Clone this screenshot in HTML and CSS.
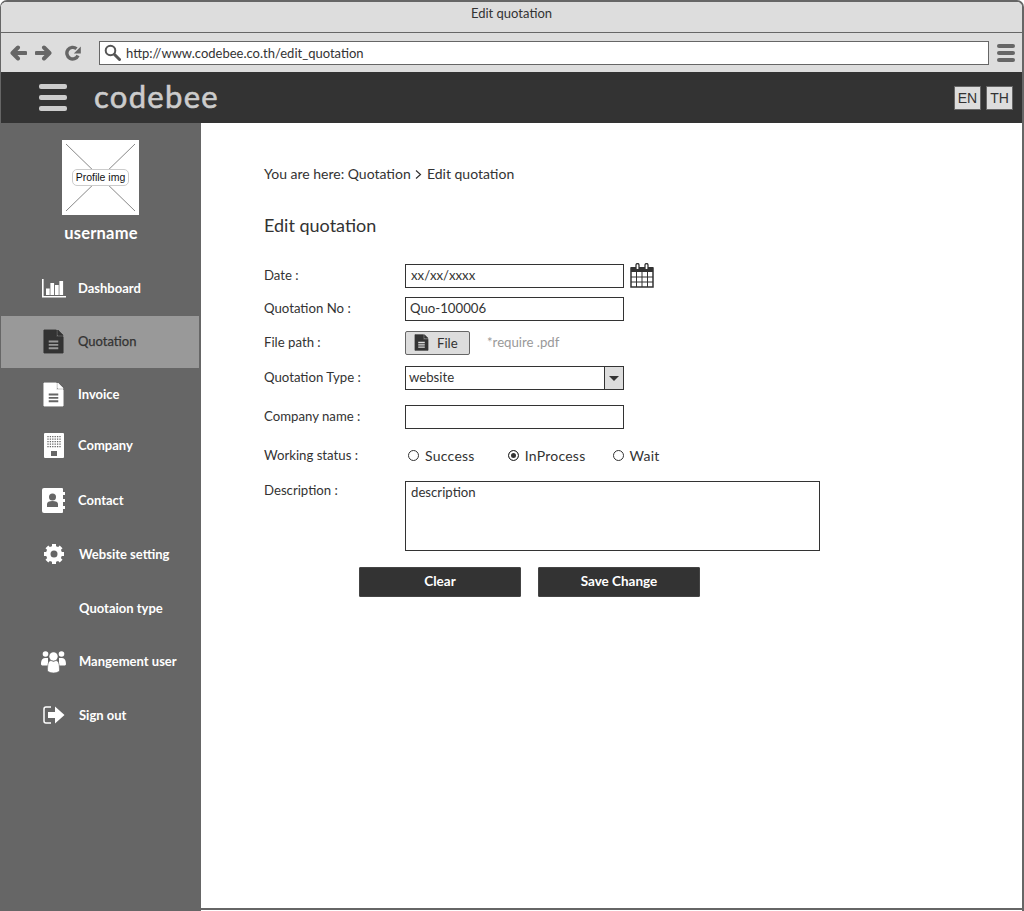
FILE: index.html
```html
<!DOCTYPE html>
<html lang="en">
<head>
    <meta charset="UTF-8">
    <meta name="viewport" content="width=device-width, initial-scale=1.0">
    <title>Edit quotation</title>
    <link rel="stylesheet" href="styles.css">
</head>
<body>
<div class="window">
    <div class="titlebar">Edit quotation</div>
    <div class="toolbar">
        <svg class="nav-icon" width="17" height="16" viewBox="0 0 17 16"><path d="M8 2.500 2.500 8 8 13.500M3 8h12.500" fill="none" stroke="#666" stroke-width="4" stroke-linecap="round" stroke-linejoin="round"/></svg>
        <svg class="nav-icon" width="17" height="16" viewBox="0 0 17 16"><path d="M9 2.500 14.500 8 9 13.500M14 8H1.500" fill="none" stroke="#666" stroke-width="4" stroke-linecap="round" stroke-linejoin="round"/></svg>
        <svg class="nav-icon reload" width="16" height="16" viewBox="0 0 16 16"><path d="M13 10.500A5.800 5.800 0 1 1 11.500 3.800" fill="none" stroke="#666" stroke-width="3.400"/><path d="M15.800 1.500v7H8.800z" fill="#666"/></svg>
        <div class="address">
            <svg width="17" height="17" viewBox="0 0 17 17"><circle cx="6.500" cy="6.500" r="4.800" fill="none" stroke="#555" stroke-width="2"/><path d="m10.500 10.500 5 5" stroke="#555" stroke-width="3" stroke-linecap="round"/></svg>
            <span>http://www.codebee.co.th/edit_quotation</span>
        </div>
        <div class="burger burger-small"><i></i><i></i><i></i></div>
    </div>
    <header class="appbar">
        <div class="burger burger-large"><i></i><i></i><i></i></div>
        <div class="logo">codebee</div>
        <div class="langs">
            <span class="lang">EN</span>
            <span class="lang">TH</span>
        </div>
    </header>
    <div class="body-row">
        <aside class="sidebar">
            <div class="profile-img">
                <svg width="77" height="75" viewBox="0 0 77 75"><path d="M4 4 73 71M73 4 4 71" stroke="#888" fill="none"/></svg>
                <span class="profile-label">Profile img</span>
            </div>
            <div class="username">username</div>
            <nav class="menu">
                <a class="menu-item m-dashboard">
                    <svg width="24" height="19" viewBox="0 0 24 19"><path d="M0 0h1.600v17H24v1.600H0z" fill="#fff"/><path d="M4 9.500h3.700V16H4zM8.400 4h3.700v12H8.400zM13 6h3.700v10H13zM17.400 2h3.700v14h-3.700z" fill="#fff"/></svg>
                    <span>Dashboard</span>
                </a>
                <a class="menu-item active">
                    <svg width="21" height="25" viewBox="0 0 22 26"><path d="M1 1h13v7h7v17H1z M15.500 1 21 6.500h-5.500z" fill="#333" stroke="#333" stroke-linejoin="round"/><path d="M6 13h10M6 16.500h10M6 20h10" stroke="#999" stroke-width="2"/></svg>
                    <span>Quotation</span>
                </a>
                <a class="menu-item m-invoice">
                    <svg width="21" height="25" viewBox="0 0 22 26"><path d="M1 1h13v7h7v17H1z M15.500 1 21 6.500h-5.500z" fill="#fff" stroke="#fff" stroke-linejoin="round"/><path d="M6 13h10M6 16.500h10M6 20h10" stroke="#666" stroke-width="2"/></svg>
                    <span>Invoice</span>
                </a>
                <a class="menu-item m-company">
                    <svg width="20" height="25" viewBox="0 0 20 25"><rect width="20" height="25" rx="1" fill="#fff"/><path d="M4 3v12M6.400 3v12M8.800 3v12M11.200 3v12M13.600 3v12M16 3v12" stroke="#666" stroke-width="1.300" stroke-dasharray="1.300 1.200"/><path d="M7 18h6v5H7z" fill="#666"/></svg>
                    <span>Company</span>
                </a>
                <a class="menu-item m-contact">
                    <svg width="23" height="25" viewBox="0 0 23 25"><path d="M2 0h18a1 1 0 0 1 1 1v23a1 1 0 0 1-1 1H2a2 2 0 0 1-2-2V2a2 2 0 0 1 2-2z" fill="#fff"/><path d="M21 4h2v3h-2zM21 11h2v3h-2zM21 18h2v3h-2z" fill="#fff"/><circle cx="10.500" cy="9" r="3.500" fill="#666"/><path d="M5 19v-3c0-2 2-3 5.500-3s5.500 1 5.500 3v3z" fill="#666"/></svg>
                    <span>Contact</span>
                </a>
                <a class="menu-item m-website m-shift">
                    <svg width="22" height="22" viewBox="0 0 22 22"><circle cx="11" cy="11" r="5.500" fill="none" stroke="#fff" stroke-width="5"/><path d="M11 1v20M1 11h20M3.900 3.900l14.200 14.200M18.100 3.900 3.900 18.100" stroke="#fff" stroke-width="4"/><circle cx="11" cy="11" r="3.500" fill="#666"/></svg>
                    <span>Website setting</span>
                </a>
                <a class="menu-item m-website m-shift">
                    <span class="icon-blank"></span>
                    <span>Quotaion type</span>
                </a>
                <a class="menu-item m-shift">
                    <svg width="25" height="23" viewBox="0 0 25 23"><circle cx="12.500" cy="6.500" r="4.200" fill="#fff"/><circle cx="4.500" cy="4" r="2.800" fill="#fff"/><circle cx="20.500" cy="4" r="2.800" fill="#fff"/><path d="M0 14.500C0 9 2 8 5 8h2v7.500H1zM25 14.500C25 9 23 8 20 8h-2v7.500h6z" fill="#fff"/><path d="M6.500 21c0-8 1-10 3.500-10.500l2.500 1 2.500-1c2.500.5 3.500 2.500 3.500 10.500-3 2.600-9 2.600-12 0z" fill="#fff" stroke="#666" stroke-width=".6"/></svg>
                    <span>Mangement user</span>
                </a>
                <a class="menu-item m-website m-shift">
                    <svg width="22" height="20" viewBox="0 0 22 20"><path d="M8 2H3a2 2 0 0 0-2 2v12a2 2 0 0 0 2 2h5" fill="none" stroke="#fff" stroke-width="1.500"/><path d="M5 7h7V1.500L21.500 10 12 18.500V13H5z" fill="#fff"/></svg>
                    <span>Sign out</span>
                </a>
            </nav>
        </aside>
        <main class="content">
            <div class="breadcrumb">You are here: Quotation
                <svg class="crumb-sep" width="7" height="9" viewBox="0 0 7 9"><path d="m1 .5 4.500 4-4.500 4" fill="none" stroke="#333" stroke-width="1.200"/></svg>
                Edit quotation</div>
            <h1 class="page-title">Edit quotation</h1>
            <form class="form">
                <div class="form-row">
                    <label>Date :</label>
                    <div class="field">
                        <div class="input input-date">xx/xx/xxxx</div>
                        <svg class="calendar" width="24" height="25" viewBox="0 0 24 25"><path d="M1 5h22v19H1z" fill="#fff" stroke="#333" stroke-width="1.500"/><path d="M1 4h22v5H1z" fill="#333"/><path d="M1 14h22M1 19h22M6.500 9v15M12 9v15M17.500 9v15" stroke="#333"/><path d="M6 6V2a1.500 1.500 0 0 1 3 0v4M15 6V2a1.500 1.500 0 0 1 3 0v4" fill="#fff" stroke="#333" stroke-width="1.300"/></svg>
                    </div>
                </div>
                <div class="form-row row-no">
                    <label>Quotation No :</label>
                    <div class="field"><div class="input input-no">Quo-100006</div></div>
                </div>
                <div class="form-row row-file">
                    <label>File path :</label>
                    <div class="field">
                        <div class="file-btn">
                            <svg width="15" height="17" viewBox="0 0 22 26"><path d="M1 1h13v7h7v17H1z M15.500 1 21 6.500h-5.500z" fill="#333" stroke="#333"/><path d="M6 13h10M6 16.500h10M6 20h10" stroke="#ddd" stroke-width="2"/></svg>
                            <span>File</span>
                        </div>
                        <span class="hint">*require .pdf</span>
                    </div>
                </div>
                <div class="form-row row-type">
                    <label>Quotation Type :</label>
                    <div class="field">
                        <div class="select">
                            <span class="select-value">website</span>
                            <span class="select-arrow"></span>
                        </div>
                    </div>
                </div>
                <div class="form-row row-company">
                    <label>Company name :</label>
                    <div class="field"><div class="input"></div></div>
                </div>
                <div class="form-row row-status">
                    <label>Working status :</label>
                    <div class="field radios">
                        <span class="radio r-success"><i></i>Success</span>
                        <span class="radio r-process on"><i></i>InProcess</span>
                        <span class="radio"><i></i>Wait</span>
                    </div>
                </div>
                <div class="form-row row-desc">
                    <label>Description :</label>
                    <div class="field"><div class="textarea">description</div></div>
                </div>
                <div class="actions">
                    <button type="button" class="btn">Clear</button>
                    <button type="button" class="btn">Save Change</button>
                </div>
            </form>
        </main>
    </div>
</div>
</body>
</html>
```

FILE: styles.css
```css
* {
    box-sizing: border-box;
}
html, body {
    margin: 0;
    height: 911px;
    overflow: hidden;
    background: #fff;
}
body {
    font-family: 'Lato', 'Liberation Sans', sans-serif;
    font-size: 13.2px;
    color: #333;
}
.window {
    height: 911px;
    width: 1024px;
    border: 2px solid #666;
    border-width: 2px 2px 0 1px;
    border-radius: 7px 7px 0 0;
    overflow: hidden;
    display: flex;
    flex-direction: column;
}
.titlebar {
    height: 30px;
    background: #ddd;
    text-align: center;
    line-height: 23px;
    font-size: 13px;
}
.toolbar {
    height: 40px;
    background: #ddd;
    border-top: 1px solid #666;
    display: flex;
    align-items: center;
    padding-left: 9px;
}
.nav-icon {
    margin-right: 8px;
}
.reload {
    margin-left: 5px;
    margin-right: 0;
}
.address {
    margin-left: 18px;
    width: 890px;
    height: 24px;
    background: #fff;
    border: 1px solid #666;
    display: flex;
    align-items: center;
    gap: 5px;
    padding-left: 4px;
    font-size: 13px;
}
.burger {
    display: flex;
    flex-direction: column;
}
.burger i {
    display: block;
    border-radius: 2px;
}
.burger-small {
    margin-left: 8px;
    gap: 3px;
}
.burger-small i {
    width: 18px;
    height: 4px;
    background: #666;
}
.burger-large {
    margin-left: 38px;
    gap: 6px;
}
.burger-large i {
    width: 28px;
    height: 5px;
    background: #ccc;
}
.appbar {
    height: 51px;
    background: #333;
    display: flex;
    align-items: center;
}
.logo {
    margin-left: 27px;
    padding-bottom: 3px;
    font-size: 31px;
    letter-spacing: 1.3px;
    color: #ccc;
    -webkit-text-stroke: 0.6px #ccc;
}
.langs {
    margin-left: auto;
    margin-right: 9px;
    display: flex;
    gap: 5px;
}
.lang {
    width: 27px;
    height: 24px;
    background: #ddd;
    border: 1px solid #666;
    text-align: center;
    line-height: 22px;
    font-family: 'Liberation Sans', sans-serif;
    font-size: 14px;
}
.body-row {
    flex: 1;
    display: flex;
    min-height: 0;
}
.sidebar {
    width: 200px;
    background: #666;
    color: #fff;
    display: flex;
    flex-direction: column;
}
.profile-img {
    position: relative;
    width: 77px;
    height: 75px;
    margin: 17px 0 0 61px;
    background: #fff;
}
.profile-img svg {
    display: block;
}
.profile-label {
    position: absolute;
    left: 10px;
    top: 29px;
    width: 57px;
    height: 17px;
    background: #fff;
    border: 1px solid #ccc;
    border-radius: 5px;
    text-align: center;
    line-height: 15px;
    font-family: 'Liberation Sans', sans-serif;
    font-size: 10.5px;
    color: #111;
}
.username {
    margin-top: 8px;
    text-align: center;
    font-size: 16.5px;
    letter-spacing: 0.2px;
    font-weight: 700;
    height: 20px;
    line-height: 20px;
}
.menu {
    margin-top: 20px;
    display: flex;
    flex-direction: column;
}
.menu-item {
    height: 52px;
    width: 198px;
    margin-top: 1px;
    padding: 0 0 2px 40px;
    display: grid;
    grid-template-columns: 25px 1fr;
    column-gap: 12px;
    align-items: center;
    justify-items: start;
    font-weight: 700;
    font-size: 13px;
}
.menu-item svg {
    justify-self: center;
}
.m-dashboard {
    margin-top: 0;
}
.m-company {
    margin-top: -1px;
}
.m-contact {
    margin-top: 3px;
}
.m-website {
    margin-top: 2px;
}
.m-shift {
    column-gap: 13px;
}
.menu-item.active {
    background: #999;
    color: #333;
    font-weight: 400;
    -webkit-text-stroke: 0.25px #333;
}
.icon-blank {
    width: 25px;
    height: 10px;
}
.content {
    flex: 1;
    margin-bottom: 1px;
    padding: 43px 0 0 63px;
    background: #fff;
    border-bottom: 2px solid #666;
}
.breadcrumb {
    height: 16px;
    line-height: 16px;
    font-size: 14px;
}
.crumb-sep {
    margin: 0 1px;
}
.page-title {
    margin: 31px 0 0;
    font-size: 18px;
    font-weight: 400;
    line-height: 24px;
    height: 24px;
}
.form {
    margin-top: 26px;
}
.form-row {
    display: flex;
    align-items: center;
}
.form-row label {
    width: 141px;
    flex: none;
    padding-bottom: 2px;
}
.field {
    display: flex;
    align-items: center;
}
.input {
    width: 219px;
    height: 24px;
    border: 1px solid #333;
    background: #fff;
    padding-left: 5px;
    line-height: 20px;
}
.input-no {
    padding-left: 4px;
}
.calendar {
    margin-left: 6px;
}
.row-no {
    margin-top: 9px;
}
.row-file {
    margin-top: 10px;
}
.row-type {
    margin-top: 11px;
}
.row-company {
    margin-top: 15px;
}
.file-btn {
    width: 65px;
    height: 24px;
    background: #ddd;
    border: 1px solid #666;
    border-radius: 2px;
    display: flex;
    align-items: center;
    gap: 8px;
    padding: 0 0 1px 8px;
}
.hint {
    margin-left: 17px;
    padding-bottom: 2px;
    color: #999;
}
.select {
    width: 219px;
    height: 24px;
    border: 1px solid #333;
    display: flex;
}
.select-value {
    flex: 1;
    padding-left: 3px;
    line-height: 20px;
}
.select-arrow {
    width: 19px;
    background: #ddd;
    border-left: 1px solid #333;
    position: relative;
}
.select-arrow::after {
    content: "";
    position: absolute;
    left: 4px;
    top: 9px;
    border: 5px solid transparent;
    border-top: 5px solid #333;
    border-bottom: 0;
}
.row-status {
    margin-top: 17px;
    height: 20px;
}
.radios {
    padding: 0 0 2px 3px;
}
.radio {
    display: flex;
    align-items: center;
    gap: 6px;
    font-size: 14px;
    letter-spacing: 0.25px;
}
.radio i {
    width: 11px;
    height: 11px;
    border: 1px solid #333;
    border-radius: 50%;
    background: #fff;
}
.radio.on i {
    background: #333;
    box-shadow: inset 0 0 0 2px #fff;
}
.r-success {
    margin-right: 33px;
}
.r-process {
    margin-right: 27px;
}
.row-desc {
    margin-top: 15px;
    align-items: flex-start;
}
.row-desc label {
    padding: 1px 0 0;
}
.textarea {
    width: 415px;
    height: 70px;
    border: 1px solid #333;
    padding: 2px 5px;
    line-height: 17px;
}
.actions {
    margin: 16px 0 0 95px;
    display: flex;
    gap: 17px;
}
.btn {
    width: 162px;
    height: 30px;
    background: #333;
    color: #fff;
    border: 1px solid #444;
    border-radius: 1px;
    font-family: inherit;
    font-size: 13.5px;
    font-weight: 700;
    padding-bottom: 4px;
}
```
